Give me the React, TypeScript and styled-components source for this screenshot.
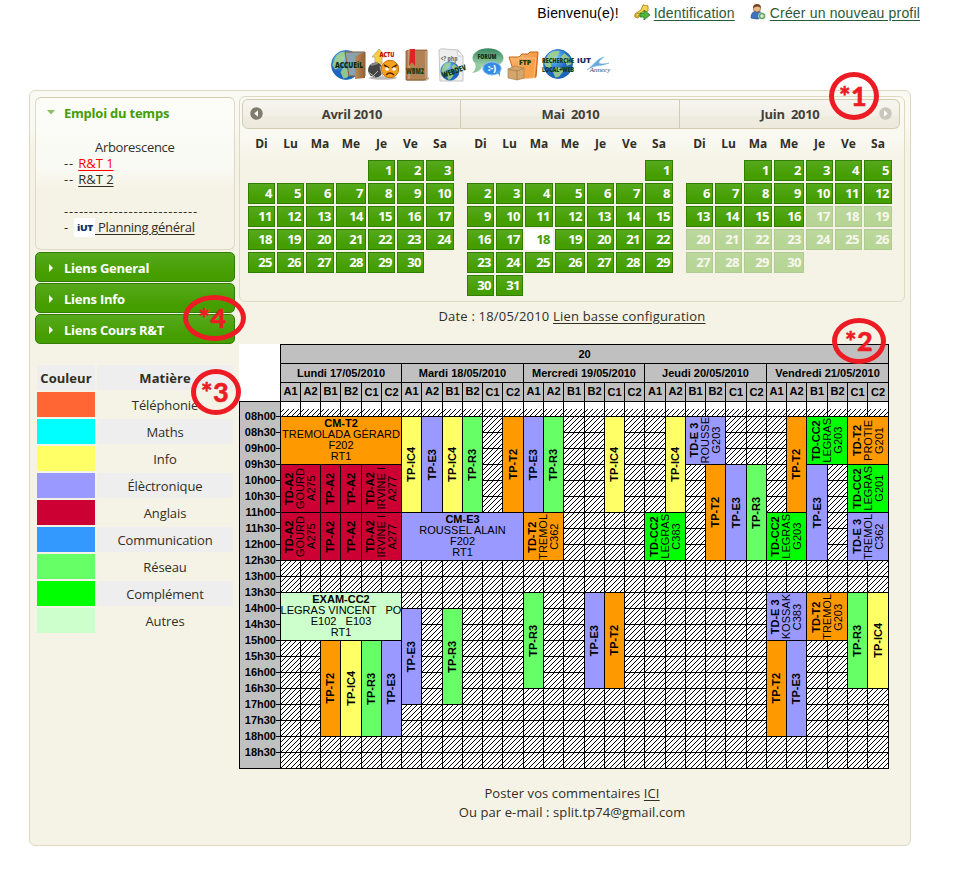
import React from "react";
import styled, { createGlobalStyle, css } from "styled-components";

const Global = createGlobalStyle`
  * { box-sizing: border-box; }
  body { margin: 0; background: #fff; color: #312e25; font-family: "Open Sans", "Noto Sans", sans-serif; font-size: 13px; }
  a { color: inherit; text-decoration: underline; text-underline-offset: 2px; }
`;

const Page = styled.div`
  position: relative;
  width: 954px;
  height: 872px;
  overflow: hidden;
`;
const TopBar = styled.header`
  height: 26px;
  padding-right: 34px;
  display: flex;
  justify-content: flex-end;
  align-items: center;
  font: 14px/16px "Liberation Sans", Arial, sans-serif;
  letter-spacing: 0.17px;
  color: #000;
`;
const TopLink = styled.a`
  color: #2c5a36;
  margin-left: 4px;
`;
const TopIcon = styled.svg`
  margin: -3px 0 0 15px;
  width: 16px;
  height: 16px;
`;
const IconNav = styled.nav`
  display: flex;
  height: 64px;
  padding: 21px 0 0 331px;
`;
const NavIcon = styled.svg`
  width: 35px;
  height: 36px;
  flex: none;
  overflow: visible;
  font-family: "Open Sans", sans-serif;
  font-weight: 800;
  text-anchor: middle;
`;
const Panel = styled.main`
  margin-left: 29px;
  width: 882px;
  height: 756px;
  border: 1px solid #dfd9c3;
  border-radius: 6px;
  padding: 5px;
  display: flex;
  align-items: flex-start;
  background: linear-gradient(#fafaf4 0, #f9f8f1 38px, #f5f3e5 60px);
`;
const Side = styled.aside`
  width: 200px;
  margin: 1px 4px 0 0;
  flex: none;
`;
const OpenSection = styled.section`
  height: 153px;
  border: 1px solid #dfd9c3;
  border-top-color: #d4ccb0;
  border-radius: 6px;
  padding: 7px 0 0 28px;
  background: linear-gradient(#fcfcf9 0, #fafaf4 70px, #f5f3e5 92px);
`;
const SectionTitle = styled.h3`
  margin: 0 0 18px -18px;
  display: flex;
  align-items: center;
  font-size: 13px;
  line-height: 16px;
  color: #459e00;
  letter-spacing: -0.23px;
  svg { margin-right: 9px; }
`;
const TreeLine = styled.div<{ $indent?: number; $color?: string; $top?: number; $spacing?: number }>`
  height: 16px;
  line-height: 16px;
  margin-top: ${(p) => p.$top || 0}px;
  padding-left: ${(p) => p.$indent || 0}px;
  white-space: pre;
  letter-spacing: ${(p) => p.$spacing ?? -0.3}px;
  display: flex;
  align-items: center;
  a { color: ${(p) => p.$color || "inherit"}; letter-spacing: ${(p) => (p.$spacing ? 0 : -0.3)}px; }
`;
const MiniLogo = styled.span`
  width: 21px;
  height: 19px;
  margin-left: 3px;
  background: #fff;
  flex: none;
  svg { display: block; }
`;
const greenFill = css`
  background: linear-gradient(#56a91d, #459e00 75%);
  border: 1px solid #327e04;
  color: #fff;
`;
const ClosedSection = styled.h3`
  ${greenFill}
  height: 30px;
  margin: 2px 0 -1px;
  border-radius: 5px;
  display: flex;
  align-items: center;
  padding: 1px 0 0 12px;
  font-size: 13px;
  letter-spacing: -0.25px;
  svg { margin-right: 10px; }
`;
const Legend = styled.div`
  display: grid;
  grid-template-columns: 58px 136px;
  grid-auto-rows: 25px;
  gap: 2px;
  margin: 22px 0 0 2px;
`;
const LegendCell = styled.div<{ $bg?: string; $head?: boolean }>`
  background: ${(p) => p.$bg || "transparent"};
  font-weight: ${(p) => (p.$head ? 700 : 400)};
  text-align: center;
  line-height: 27px;
  letter-spacing: ${(p) => (p.$head ? 0.05 : -0.1)}px;
  white-space: nowrap;
`;
const Content = styled.div`
  width: 666px;
  flex: none;
`;
const Picker = styled.section`
  height: 206px;
  border: 1px solid #dfd9c3;
  border-radius: 6px;
  padding: 2px;
  display: flex;
  background: linear-gradient(#fafaf4 0, #f9f9f2 42px, #f5f3e5 66px);
`;
const Month = styled.div<{ $last?: boolean }>`
  width: ${(p) => (p.$last ? 220 : 219)}px;
`;
const MonthHead = styled.div<{ $edge?: "l" | "r" }>`
  position: relative;
  height: 30px;
  border: 1px solid #d4ccb0;
  border-left-width: ${(p) => (p.$edge === "l" ? 1 : 0)}px;
  border-radius: ${(p) => (p.$edge === "l" ? "6px 0 0 6px" : p.$edge === "r" ? "0 6px 6px 0" : "0")};
  background: linear-gradient(#f7f5f0, #f2efe6 55%, #eeebdf 60%, #edeadd);
  display: flex;
  align-items: center;
  justify-content: center;
  padding-left: 1px;
  color: #433f38;
  font-weight: 700;
  white-space: pre;
  letter-spacing: -0.3px;
`;
const Arrow = styled.svg<{ $side: "left" | "right" }>`
  position: absolute;
  top: 7px;
  ${(p) => p.$side}: 7px;
  width: 13px;
  height: 13px;
`;
const Days = styled.div`
  display: grid;
  grid-template-columns: 27px 27px 28px 30px 27px 27px 28px;
  grid-template-rows: 29px;
  grid-auto-rows: 21px;
  gap: 2px;
  margin-left: 6px;
`;
const WeekDay = styled.div`
  text-align: center;
  font-weight: 700;
  font-size: 12px;
  line-height: 30px;
`;
const Day = styled.div<{ $state: "on" | "off" | "today" }>`
  ${greenFill}
  font-weight: 700;
  text-align: right;
  padding-right: 2px;
  line-height: 18px;
  letter-spacing: -0.5px;
  opacity: ${(p) => (p.$state === "off" ? 0.35 : 1)};
  ${(p) => p.$state === "today" && css`
    background: #fff;
    border-color: #fff;
    color: #459e00;
  `}
`;
const DateLine = styled.p`
  margin: 0;
  height: 42px;
  line-height: 28px;
  text-align: center;
  letter-spacing: 0.19px;
`;
const Table = styled.section`
  display: flex;
  width: 650px;
  height: 425px;
  font: 11px/11px "Liberation Sans", Arial, sans-serif;
  color: #000;
`;
const TimeSide = styled.div`
  width: 41px;
  padding-top: 57px;
  background: #fff;
`;
const TimeColumn = styled.div`
  height: 368px;
  background: #c0c0c0;
  border: solid #000;
  border-width: 1px 0 1px 1px;
  padding-top: 6px;
`;
const TimeLabel = styled.div`
  height: 16px;
  line-height: 15px;
  font-weight: 700;
  display: flex;
  justify-content: flex-end;
  align-items: center;
  &::after { content: ""; width: 4px; height: 1px; background: #000; margin-top: 1px; }
`;

const columnEdges = [280, 300, 320, 340, 361, 381, 401, 421, 442, 462, 482, 502, 523, 543, 563, 584, 604, 624, 644, 665, 685, 705, 725, 746, 766, 786, 806, 827, 847, 867, 888];
const columns = columnEdges.slice(1).map((v, i) => `${v - columnEdges[i]}px`).join(" ");
const hatchTile =
  "data:image/svg+xml,%3Csvg xmlns='http://www.w3.org/2000/svg' width='5' height='5' shape-rendering='crispEdges'%3E%3Cpath d='M0 4h1v1H0zM1 3h1v1H1zM2 2h1v1H2zM3 1h1v1H3zM4 0h1v1H4z'/%3E%3C/svg%3E";

const Slots = styled.div`
  width: 609px;
  height: 425px;
  display: grid;
  grid-template-columns: ${columns};
  grid-template-rows: 19px 19px 19px 15px repeat(22, 16px);
  border: solid #000;
  border-width: 0 1px 1px 0;
  background: #fff;
`;
const HeadCell = styled.div<{ $c: number; $s: number; $r: number; $line?: number }>`
  grid-area: ${(p) => `${p.$r} / ${p.$c + 1} / span 1 / span ${p.$s}`};
  background: #c0c0c0;
  border: solid #000;
  border-width: 1px 0 0 1px;
  font-weight: 700;
  line-height: ${(p) => p.$line || 19}px;
  text-align: center;
  white-space: nowrap;
`;
const EmptyCell = styled.div<{ $c: number; $r: number; $first?: boolean }>`
  grid-area: ${(p) => `${p.$r} / ${p.$c + 1}`};
  border: solid #000;
  border-width: 1px 0 0 1px;
  background: url("${hatchTile}");
  ${(p) => p.$first && css`
    background-image: linear-gradient(#fff, #fff), url("${hatchTile}");
    background-size: 100% 7px, auto;
    background-repeat: no-repeat, repeat;
    background-position: 0 0, 0 0;
  `}
`;
const EventCell = styled.div<{ $c: number; $s: number; $r: number; $n: number; $bg: string; $vertical: boolean }>`
  grid-area: ${(p) => `${p.$r + 5} / ${p.$c + 1} / span ${p.$n} / span ${p.$s}`};
  background: ${(p) => p.$bg};
  border: solid #000;
  border-width: 1px 0 0 1px;
  overflow: hidden;
  display: flex;
  align-items: center;
  justify-content: center;
  text-align: center;
  white-space: pre;
  min-width: 0;
  padding-bottom: ${(p) => (p.$vertical ? 0 : 2)}px;
`;
const EventText = styled.div<{ $vertical: boolean }>`
  flex: none;
  ${(p) => p.$vertical && css`
    writing-mode: vertical-rl;
    transform: rotate(180deg);
  `}
`;
const Footer = styled.footer`
  padding-top: 15px;
  line-height: 19px;
  text-align: center;
  letter-spacing: 0.1px;
`;
const Mark = styled.div<{ $x: number; $y: number; $w: number; $h: number; $shift?: number }>`
  position: absolute;
  left: ${(p) => p.$x}px;
  top: ${(p) => p.$y}px;
  width: ${(p) => p.$w}px;
  height: ${(p) => p.$h}px;
  border: 5px solid #ed1c24;
  border-radius: 50%;
  color: #ed1c24;
  font: 900 27px/42px Lato, sans-serif;
  padding-right: ${(p) => p.$shift || 0}px;
  display: flex;
  align-items: center;
  justify-content: center;
  letter-spacing: 0.5px;
  -webkit-text-stroke: 0.5px #ed1c24;
`;

const O = "#ff9900", R = "#cc0033", Y = "#ffff66", V = "#9999ff", G = "#66ff66", C = "#00ff00", L = "#ccffcc";

/* column, column span, first half-hour slot, slot span, colour, lines */
type Ev = [number, number, number, number, string, string[]];
const events: Ev[] = [
  [0, 6, 0, 3, O, ["CM-T2", "TREMOLADA GÉRARD", "F202", "RT1"]],
  [0, 2, 3, 3, R, ["TD-A2", "GOURD", "A275"]],
  [2, 1, 3, 3, R, ["TP-A2"]],
  [3, 1, 3, 3, R, ["TP-A2"]],
  [4, 2, 3, 3, R, ["TD-A2", "IRVINE I", "A277"]],
  [0, 2, 6, 3, R, ["TD-A2", "GOURD", "A275"]],
  [2, 1, 6, 3, R, ["TP-A2"]],
  [3, 1, 6, 3, R, ["TP-A2"]],
  [4, 2, 6, 3, R, ["TD-A2", "IRVINE I", "A277"]],
  [0, 6, 11, 3, L, ["EXAM-CC2", "LEGRAS VINCENT   PO", "E102   E103", "RT1"]],
  [2, 1, 14, 6, O, ["TP-T2"]],
  [3, 1, 14, 6, Y, ["TP-IC4"]],
  [4, 1, 14, 6, G, ["TP-R3"]],
  [5, 1, 14, 6, V, ["TP-E3"]],
  [6, 1, 0, 6, Y, ["TP-IC4"]],
  [7, 1, 0, 6, V, ["TP-E3"]],
  [8, 1, 0, 6, Y, ["TP-IC4"]],
  [9, 1, 0, 6, G, ["TP-R3"]],
  [11, 1, 0, 6, O, ["TP-T2"]],
  [6, 6, 6, 3, V, ["CM-E3", "ROUSSEL ALAIN", "F202", "RT1"]],
  [6, 1, 12, 6, V, ["TP-E3"]],
  [8, 1, 12, 6, G, ["TP-R3"]],
  [12, 1, 0, 6, V, ["TP-E3"]],
  [13, 1, 0, 6, G, ["TP-R3"]],
  [16, 1, 0, 6, Y, ["TP-IC4"]],
  [12, 2, 6, 3, O, ["TD-T2", "TREMOL", "C362"]],
  [12, 1, 11, 6, G, ["TP-R3"]],
  [15, 1, 11, 6, V, ["TP-E3"]],
  [16, 1, 11, 6, O, ["TP-T2"]],
  [19, 1, 0, 6, Y, ["TP-IC4"]],
  [20, 2, 0, 3, V, ["TD-E 3", "ROUSSE", "G203"]],
  [18, 2, 6, 3, C, ["TD-CC2", "LEGRAS", "C383"]],
  [21, 1, 3, 6, O, ["TP-T2"]],
  [22, 1, 3, 6, V, ["TP-E3"]],
  [23, 1, 3, 6, G, ["TP-R3"]],
  [25, 1, 0, 6, O, ["TP-T2"]],
  [26, 2, 0, 3, C, ["TD-CC2", "LEGRAS", "G203"]],
  [28, 2, 0, 3, O, ["TD-T2", "PROTIE", "G201"]],
  [28, 2, 3, 3, C, ["TD-CC2", "LEGRAS", "G201"]],
  [24, 2, 6, 3, C, ["TD-CC2", "LEGRAS", "G203"]],
  [26, 1, 3, 6, V, ["TP-E3"]],
  [28, 2, 6, 3, V, ["TD-E 3", "TREMOL", "C362"]],
  [24, 2, 11, 3, V, ["TD-E 3", "KOSSAK", "C383"]],
  [26, 2, 11, 3, O, ["TD-T2", "TREMOL", "G203"]],
  [28, 1, 11, 6, G, ["TP-R3"]],
  [29, 1, 11, 6, Y, ["TP-IC4"]],
  [24, 1, 14, 6, O, ["TP-T2"]],
  [25, 1, 14, 6, V, ["TP-E3"]],
];

const weekDays = ["Lundi 17/05/2010", "Mardi 18/05/2010", "Mercredi 19/05/2010", "Jeudi 20/05/2010", "Vendredi 21/05/2010"];
const groups = ["A1", "A2", "B1", "B2", "C1", "C2"];
const times = Array.from({ length: 22 }, (_, i) => `${String(8 + (i >> 1)).padStart(2, "0")}h${i % 2 ? "30" : "00"}`);

function Timetable() {
  return (
    <Table>
      <TimeSide>
        <TimeColumn>{times.map((t) => <TimeLabel key={t}>{t}</TimeLabel>)}</TimeColumn>
      </TimeSide>
      <Slots>
        <HeadCell $c={0} $s={30} $r={1}>20</HeadCell>
        {weekDays.map((d, i) => <HeadCell key={d} $c={i * 6} $s={6} $r={2}>{d}</HeadCell>)}
        {weekDays.map((d, i) => groups.map((g, j) => (
          <HeadCell key={d + g} $c={i * 6 + j} $s={1} $r={3} $line={j > 3 ? 18 : 16}>{g}</HeadCell>
        )))}
        {Array.from({ length: 23 * 30 }, (_, i) => {
          const r = Math.floor(i / 30);
          return <EmptyCell key={i} $first={r === 0} $c={i % 30} $r={r + 4} />;
        })}
        {events.map(([c, s, r, n, bg, lines], i) => (
          <EventCell key={i} $c={c} $s={s} $r={r} $n={n} $bg={bg} $vertical={s < 6}>
            <EventText $vertical={s < 6}>
              <b>{lines[0]}</b>
              {lines.slice(1).map((l) => <React.Fragment key={l}><br />{l}</React.Fragment>)}
            </EventText>
          </EventCell>
        ))}
      </Slots>
    </Table>
  );
}

const months = [
  { name: "Avril 2010", start: 4, count: 30, last: 30, today: 0 },
  { name: "Mai  2010", start: 6, count: 31, last: 31, today: 18 },
  { name: "Juin  2010", start: 2, count: 30, last: 16, today: 0 },
];

function Calendar() {
  return (
    <Picker>
      {months.map((m, k) => (
        <Month key={m.name} $last={k === 2}>
          <MonthHead $edge={k === 0 ? "l" : k === 2 ? "r" : undefined}>
            {k === 0 && (
              <Arrow $side="left" viewBox="0 0 13 13">
                <circle cx="6.5" cy="6.5" r="6.2" fill="#807b6d" /><path d="M8 3.2v6.6L4.2 6.5z" fill="#fff" />
              </Arrow>
            )}
            {m.name}
            {k === 2 && (
              <Arrow $side="right" viewBox="0 0 13 13">
                <circle cx="6.5" cy="6.5" r="6.2" fill="#c9c6bd" /><path d="M5 3.2v6.6l3.8-3.3z" fill="#fff" />
              </Arrow>
            )}
          </MonthHead>
          <Days>
            {["Di", "Lu", "Ma", "Me", "Je", "Ve", "Sa"].map((d) => <WeekDay key={d}>{d}</WeekDay>)}
            {Array.from({ length: m.start }, (_, i) => <div key={`e${i}`} />)}
            {Array.from({ length: m.count }, (_, i) => (
              <Day key={i} $state={i + 1 === m.today ? "today" : i + 1 > m.last ? "off" : "on"}>{i + 1}</Day>
            ))}
          </Days>
        </Month>
      ))}
    </Picker>
  );
}

const Globe = ({ x, y, r }: { x: number; y: number; r: number }) => (
  <g transform={`translate(${x} ${y}) scale(${r / 16})`}>
    <circle r="16" fill="url(#ocean)" stroke="#1864b4" strokeWidth=".8" />
    <path d="M-12-8C-8-15-2-15 2-14L0-9-4-8-3-4-8-1-7 3-12 5-15 0zM3-8L7-12 13-7 15 0 10 2 8-2 4-3zM-3 3L3 4 6 8 1 14-3 15-6 8z" fill="#9fce87" opacity=".9" />
  </g>
);

const Script = styled.text`
  font-family: "Liberation Serif", serif;
  font-style: italic;
  font-weight: 400;
`;

function SiteIcons() {
  return (
    <IconNav>
      <NavIcon viewBox="0 0 35 36">
        <defs>
          <radialGradient id="ocean" cx=".35" cy=".25"><stop offset="0" stopColor="#b8e0fb" /><stop offset=".5" stopColor="#4a9be4" /><stop offset="1" stopColor="#1c65bd" /></radialGradient>
          <linearGradient id="wood"><stop offset="0" stopColor="#c08955" /><stop offset="1" stopColor="#936137" /></linearGradient>
          <linearGradient id="folder" x2="1" y2="1"><stop offset="0" stopColor="#ffc27e" /><stop offset="1" stopColor="#ec7318" /></linearGradient>
          <linearGradient id="leaf" x2="0" y2="1"><stop offset="0" stopColor="#368760" /><stop offset="1" stopColor="#a9d9b2" /></linearGradient>
        </defs>
        <Globe x={15} y={18} r={14.5} />
        <path d="M14 5h20v24H18z" fill="#86a4b0" stroke="#8a5b32" />
        <path d="M24 9l10-4v26l-10 1z" fill="url(#wood)" />
        <text x="18" y="21" fontSize="8" textLength="28" lengthAdjust="spacingAndGlyphs" fill="#0b2b10">ACCUEiL</text>
      </NavIcon>
      <NavIcon viewBox="0 0 35 36">
        <path d="M6 10l7-8 7 8h-4v7H9v-7z" fill="#f2cf45" stroke="#bca77a" strokeWidth=".8" />
        <ellipse cx="17" cy="31" rx="14" ry="1.8" fill="#bbb" />
        <circle cx="9.5" cy="23" r="7.5" fill="#454545" /><path d="M5 18l7-2" stroke="#8b8b8b" strokeWidth="2" />
        <circle cx="24" cy="22" r="8.7" fill="#f6a11d" stroke="#c56c08" />
        <path d="M18 18l5 3M31 18l-5 3" stroke="#552400" strokeWidth="1.5" />
        <circle cx="21" cy="22" r="1.8" fill="#fff" /><circle cx="28" cy="22" r="1.8" fill="#fff" />
        <path d="M20 28q4-4 8 0" fill="none" stroke="#5d2200" strokeWidth="1.3" />
        <path d="M2 25l7 5m3-6l-7 7M14 19l3 12" stroke="#bbb" strokeWidth="1" />
        <text x="21" y="10" fontSize="7.5" textLength="15" lengthAdjust="spacingAndGlyphs" fill="#c50b0b">ACTU</text>
      </NavIcon>
      <NavIcon viewBox="0 0 35 36">
        <path d="M5 32h20l3-2v2l-3 2H6z" fill="#c9b399" />
        <path d="M5 4l3-1h18v28l-3 2H5z" fill="#b28257" stroke="#89582f" strokeWidth=".8" />
        <path d="M8 3v29M25 4v27" stroke="#d8b68f" />
        <path d="M9 2h5v17l-3-4-3 4z" fill="#dd2525" />
        <text x="14" y="27" fontSize="8" textLength="18" lengthAdjust="spacingAndGlyphs" fill="#1d3b0f">WBM2</text>
      </NavIcon>
      <NavIcon viewBox="0 0 35 36">
        <path d="M3 3q2-2 5-1l14 1 5 6v25H4z" fill="#eee" stroke="#c6c6c6" />
        <path d="M21 3l6 6h-5z" fill="#fff" stroke="#ccc" />
        <text x="13" y="14" fontSize="7" textLength="17" lengthAdjust="spacingAndGlyphs" fill="#777">&lt;? php</text>
        <Globe x={14} y={24} r={9.3} />
        <text x="18" y="27" fontSize="8" textLength="25" lengthAdjust="spacingAndGlyphs" fill="#123812" transform="rotate(-20 18 24)">WEBDEV</text>
      </NavIcon>
      <NavIcon viewBox="0 0 35 36">
        <ellipse cx="17" cy="11" rx="15.5" ry="9.7" fill="url(#leaf)" />
        <path d="M4 16q2 6-3 10 8-1 10-6z" fill="#94c8a0" />
        <ellipse cx="21" cy="21.5" rx="9.2" ry="6.5" fill="#3689e4" stroke="#8bc1ef" />
        <path d="M24 26q4 0 5 4 1-4-1-7z" fill="#4b9be9" />
        <text x="21" y="24" fontSize="8.5" fill="#fff">:-)</text>
        <text x="16" y="12" fontSize="7.5" textLength="19" lengthAdjust="spacingAndGlyphs" fill="#102d13">FORUM</text>
      </NavIcon>
      <NavIcon viewBox="0 0 35 36">
        <path d="M3 10h10l3-3h6l2-2h8l-2 25-20 2z" fill="url(#folder)" stroke="#c46514" />
        <path d="M12 11h18l-2 20-14 1z" fill="#f8a14c" stroke="#ffd1a0" strokeWidth=".7" />
        <path d="M2 22l7-3 9 2v10l-7 2-9-2z" fill="#d4a66e" stroke="#a37947" strokeWidth=".6" />
        <path d="M2 22l9 2 7-3M11 24v9" fill="none" stroke="#9b7445" strokeWidth=".7" />
        <text x="19" y="18" fontSize="7.4" textLength="12" lengthAdjust="spacingAndGlyphs" fill="#183319">FTP</text>
      </NavIcon>
      <NavIcon viewBox="0 0 35 36">
        <Globe x={17} y={17} r={14.5} />
        <text x="17" y="16" fontSize="7.4" textLength="32" lengthAdjust="spacingAndGlyphs" fill="#143915">RECHERCHE</text>
        <text x="17" y="25" fontSize="7.4" textLength="32" lengthAdjust="spacingAndGlyphs" fill="#143915">LOCAL+WEB</text>
      </NavIcon>
      <NavIcon viewBox="0 0 35 36">
        <text x="8" y="16" fontSize="7.5" textLength="14" lengthAdjust="spacingAndGlyphs" fill="#172f65">iUT</text>
        <path d="M11 23C17 19 20 12 28 10 22 14 19 19 33 16 23 20 20 17 11 23z" fill="#6aabdd" stroke="#6aabdd" strokeWidth=".5" />
        <Script x="24" y="25" fontSize="7" fill="#24477f">Annecy</Script>
      </NavIcon>
    </IconNav>
  );
}

const subjects: [string, string][] = [
  ["#ff6633", "Téléphonie"], ["#00ffff", "Maths"], [Y, "Info"], [V, "Élèctronique"], [R, "Anglais"],
  ["#3399ff", "Communication"], [G, "Réseau"], [C, "Complément"], [L, "Autres"],
];

export default function App() {
  return (
    <Page>
      <Global />
      <TopBar>
        Bienvenu(e)!
        <TopIcon viewBox="0 0 16 16">
          <path d="M9 1l5 1v5l-3 1-2-1-5 7-3-1v-3l6-4z" fill="#f5d653" stroke="#bd8d19" />
          <path d="M2 10l3-1v3H1z" fill="#ffea84" stroke="#bd8d19" />
          <path d="M6 9h4V6l6 5-6 5v-3H6z" fill="#4fb53c" stroke="#23791b" strokeWidth=".8" />
        </TopIcon>
        <TopLink>Identification</TopLink>
        <TopIcon viewBox="0 0 16 16">
          <path d="M1 14q0-7 6-7t6 7q-6 2-12 0z" fill="#3f73bd" stroke="#244e8a" strokeWidth=".7" />
          <circle cx="7" cy="4.5" r="3.6" fill="#eab987" stroke="#73451d" strokeWidth=".6" />
          <path d="M3 4q0-4 4-4t4 4Q8 1 3 4z" fill="#79451d" />
          <circle cx="12" cy="12" r="3.6" fill="#61a55b" stroke="#fff" strokeWidth=".5" /><path d="M12 10v4M10 12h4" stroke="#fff" />
        </TopIcon>
        <TopLink>Créer un nouveau profil</TopLink>
      </TopBar>
      <SiteIcons />
      <Panel>
        <Side>
          <OpenSection>
            <SectionTitle>
              <svg width="9" height="8"><path d="M1 1h8L5 5.5z" fill="#8bc063" /></svg>Emploi du temps
            </SectionTitle>
            <TreeLine $indent={31}>Arborescence</TreeLine>
            <TreeLine $color="#f00" $spacing={0.8}>-- <a>R&amp;T 1</a></TreeLine>
            <TreeLine $spacing={0.8}>-- <a>R&amp;T 2</a></TreeLine>
            <TreeLine $top={16} $spacing={0.78}>---------------------------</TreeLine>
            <TreeLine>- <MiniLogo><svg width="21" height="19"><text x="3" y="13" fontSize="9" fontWeight="800" textLength="16" lengthAdjust="spacingAndGlyphs" fill="#172f65">iUT</text></svg></MiniLogo><a> Planning général</a></TreeLine>
          </OpenSection>
          {["Liens General", "Liens Info", "Liens Cours R&T"].map((t) => (
            <ClosedSection key={t}>
              <svg width="6" height="8"><path d="M1 0l4 4-4 4z" fill="#fff" /></svg>{t}
            </ClosedSection>
          ))}
          <Legend>
            <LegendCell $bg="#eee" $head>Couleur</LegendCell>
            <LegendCell $bg="#eee" $head>Matière</LegendCell>
            {subjects.map(([color, name], i) => (
              <React.Fragment key={name}>
                <LegendCell $bg={color} />
                <LegendCell $bg={i % 2 ? "#eee" : undefined}>{name}</LegendCell>
              </React.Fragment>
            ))}
          </Legend>
        </Side>
        <Content>
          <Calendar />
          <DateLine>Date : 18/05/2010 <a>Lien basse configuration</a></DateLine>
          <Timetable />
          <Footer>
            Poster vos commentaires <a>ICI</a><br />Ou par e-mail : split.tp74@gmail.com
          </Footer>
        </Content>
      </Panel>
      <Mark $x={829} $y={72} $w={50} $h={48} $shift={2}>*1</Mark>
      <Mark $x={832} $y={318} $w={54} $h={46}>*2</Mark>
      <Mark $x={191} $y={369} $w={50} $h={46} $shift={2}>*3</Mark>
      <Mark $x={183} $y={295} $w={63} $h={46} $shift={4}>*4</Mark>
    </Page>
  );
}
